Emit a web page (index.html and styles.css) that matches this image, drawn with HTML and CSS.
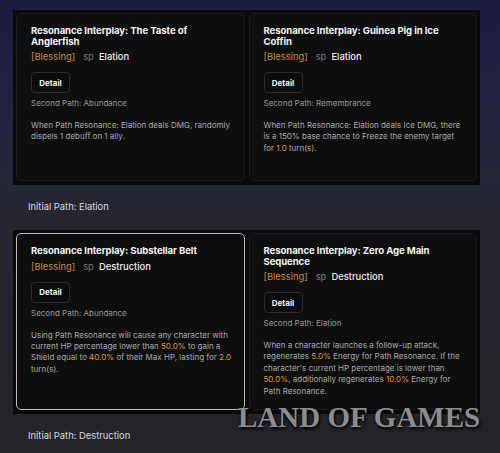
FILE: index.html
```html
<!DOCTYPE html>
<html lang="en">
<head>
  <meta charset="UTF-8" />
  <meta name="viewport" content="width=device-width, initial-scale=1.0"/>
  <title>Resonance Interplay</title>
  <link rel="stylesheet" href="styles.css">
</head>
<body>

  <main class="page">

    <!-- Elation -->
    <section class="group">
      <div class="panel panel-tall">
        <article class="card">
          <h3 class="card-title">Resonance Interplay: The Taste of Anglerfish</h3>
          <div class="card-meta"><span class="tag">[Blessing]</span><span class="sp">sp</span><span class="path">Elation</span></div>
          <button class="detail">Detail</button>
          <p class="second">Second Path: Abundance</p>
          <p class="desc">When Path Resonance: Elation deals DMG, randomly dispels 1 debuff on 1 ally.</p>
        </article>
        <article class="card">
          <h3 class="card-title">Resonance Interplay: Guinea Pig in Ice Coffin</h3>
          <div class="card-meta"><span class="tag">[Blessing]</span><span class="sp">sp</span><span class="path">Elation</span></div>
          <button class="detail">Detail</button>
          <p class="second">Second Path: Remembrance</p>
          <p class="desc">When Path Resonance: Elation deals Ice DMG, there is a 150% base chance to Freeze the enemy target for <b>1.0</b> turn(s).</p>
        </article>
      </div>
      <p class="initial">Initial Path: Elation</p>
    </section>

    <!-- Destruction -->
    <section class="group">
      <div class="panel">
        <article class="card card-active">
          <h3 class="card-title">Resonance Interplay: Substellar Belt</h3>
          <div class="card-meta"><span class="tag">[Blessing]</span><span class="sp">sp</span><span class="path">Destruction</span></div>
          <button class="detail">Detail</button>
          <p class="second">Second Path: Abundance</p>
          <p class="desc">Using Path Resonance will cause any character with current HP percentage lower than <b>50.0%</b> to gain a Shield equal to <b>40.0%</b> of their Max HP, lasting for <b>2.0</b> turn(s).</p>
        </article>
        <article class="card">
          <h3 class="card-title">Resonance Interplay: Zero Age Main Sequence</h3>
          <div class="card-meta"><span class="tag">[Blessing]</span><span class="sp">sp</span><span class="path">Destruction</span></div>
          <button class="detail">Detail</button>
          <p class="second">Second Path: Elation</p>
          <p class="desc">When a character launches a follow-up attack, regenerates <b>5.0%</b> Energy for Path Resonance. If the character's current HP percentage is lower than <b>50.0%</b>, additionally regenerates <b>10.0%</b> Energy for Path Resonance.</p>
        </article>
      </div>
      <p class="initial">Initial Path: Destruction</p>
    </section>

  </main>

  <!-- водяной знак -->
  <div class="watermark">LAND OF GAMES</div>

</body>
</html>
```
FILE: styles.css
```css
* {
  margin: 0;
  padding: 0;
  box-sizing: border-box;
}

body {
  font-family: Inter, "Noto Sans", sans-serif;
  min-height: 453px;
  background: linear-gradient(180deg, #1d1b42 0, #23233f 120px, #25263a 170px, #25262e 220px, #232429 100%);
  overflow: hidden;
}

.page {
  padding: 10px 20px 0 13px;
}

/* Чёрная подложка с карточками */
.panel {
  display: grid;
  grid-template-columns: 1fr 1fr;
  gap: 4px;
  padding: 3px 3px 4px;
  background-color: #0a0a0b;
}

.panel-tall .card {
  min-height: 168px;
}

.card {
  padding: 12px 10px 12px 14px;
  background-color: #0e0e0f;
  border: 1px solid #1b1b1d;
  border-radius: 5px;
}

.card-active {
  border-color: #bcbcbc;
}

.card-title {
  font-size: 9.6px;
  font-weight: 700;
  line-height: 10.5px;
  color: #f2f2f2;
  letter-spacing: -0.1px;
}

.card-meta {
  display: flex;
  align-items: baseline;
  gap: 8px;
  margin-top: 3px;
  font-size: 9.4px;
  line-height: 13px;
}

.tag {
  color: #cf8a42;
}

.sp {
  color: #7c7c7c;
  margin-right: -3px;
}

.path {
  color: #ededed;
  font-weight: 500;
}

.detail {
  display: block;
  width: 39px;
  height: 21px;
  margin-top: 9px;
  font-family: inherit;
  font-size: 8px;
  font-weight: 700;
  color: #f0f0f0;
  background-color: #0c0c0c;
  border: 1px solid #2b2b2d;
  border-radius: 4px;
}

.second {
  margin-top: 5px;
  font-size: 8px;
  line-height: 11px;
  color: #9a9a9a;
}

.desc {
  margin-top: 11px;
  font-size: 8px;
  line-height: 11.4px;
  color: #ababab;
}

.desc b {
  font-weight: 400;
  color: #e39a3e;
}

.initial {
  padding: 16px 0 17px 15px;
  font-size: 9.4px;
  line-height: 12px;
  color: #dadada;
}

.watermark {
  position: absolute;
  left: 238px;
  top: 401px;
  font-family: "Liberation Serif", serif;
  font-size: 29px;
  font-weight: 700;
  color: #8d8d8d;
  text-shadow: 1px 2px 3px #000, 0 0 2px #111;
}
```
